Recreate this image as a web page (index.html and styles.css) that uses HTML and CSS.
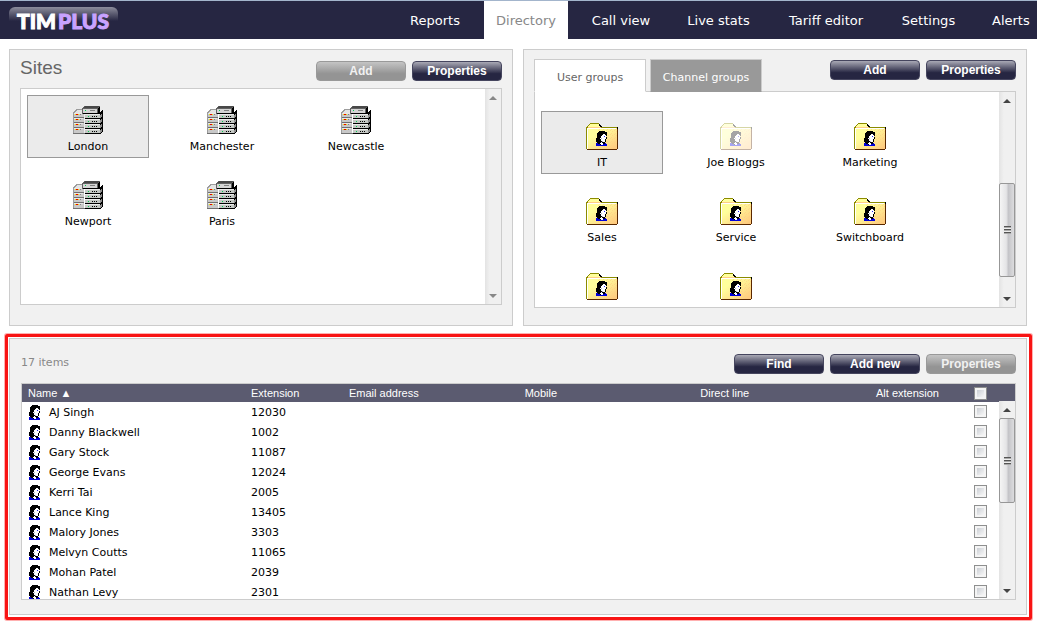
FILE: index.html
```html
<!DOCTYPE html>
<html lang="en">
<head>
<meta charset="utf-8">
<title>TIMPLUS - Directory</title>
<link rel="stylesheet" href="styles.css">
</head>
<body>
<svg class="sprites" width="0" height="0" aria-hidden="true">
  <symbol id="person" viewBox="0 0 11 15">
    <path fill="#0000d8" d="M0 12h10v1h1v2h-11z"/>
    <path fill="#000" d="M3 0h6v1h2v4h-1v1h1v2h-1v3h-1v2h-2v1h-3v-1h-2v-1h-1v-1h-1v-4h1v-5h1v-1h1z"/>
    <path fill="#fff" d="M7 3h2v1h1v4h-1v3h-3v-1h-1v-2h-1v-1h1v-2h1v-1h1zM5 11h1v1h1v2h-2v-1h-1v-1h1z"/>
    <path fill="#b8b8cc" d="M5 7h1v1h-1zM6 10h1v1h-1z"/>
    <path fill="#2020f0" d="M8 5h1v1h-1z"/>
  </symbol>
  <symbol id="folder" viewBox="0 0 32 28">
    <path fill="#8c8c00" d="M4 1h9v1h1v1h1v1h1v1h15v1h1v21h-1v1h-30v-1h-1v-22h1v-1h1v-1h1v-1h1z"/>
    <path fill="#ffff9c" d="M4 2h9v1h1v1h1v1h-13v-1h1v-1h1z"/>
    <path fill="#ffce84" d="M2 5h13v1h-13z"/>
    <path fill="url(#folderFace)" d="M1 6h30v21h-30z"/>
    <path fill="url(#folderGrain)" d="M12 7h19v20h-19z"/>
    <path fill="#fff" d="M1 6h29v1h-28v20h-1z"/>
    <path fill="#5a2800" d="M31 6h1v21h-1v1h-30v-1h30z"/>
    <path fill="#000" d="M13 2h1v1h1v1h1v1h-2v-1h-1zM31 5h1v2h-1z"/>
    <use href="#person" x="10" y="9" width="11" height="15"/>
  </symbol>
  <symbol id="server" viewBox="0 0 30 28">
    <path fill="#9c9c9c" d="M0 6l4 -3h7v3h-1v22h-10z"/>
    <path fill="#e4e4e4" d="M2 6l3 -2h4v3h-7z"/>
    <path fill="#c8c8c8" d="M1 7h10v20h-10z"/>
    <path fill="#e8e8e8" d="M1 7h9v1h-9zM1 12h9v1h-9zM1 17h9v1h-9zM1 22h9v1h-9z"/>
    <path fill="#707070" d="M1 11h10v1h-10zM1 16h10v1h-10zM1 21h10v1h-10zM0 27h12v1h-12z"/>
    <path fill="#f0e000" d="M2 8h1v1h-1zM5 8h1v1h-1zM2 13h1v1h-1zM5 13h1v1h-1zM2 18h1v1h-1zM5 18h1v1h-1zM2 23h1v1h-1zM5 23h1v1h-1z"/>
    <path fill="#e00000" d="M3 8h2v1h-2zM3 13h2v1h-2zM3 18h2v1h-2zM3 23h2v1h-2z"/>
    <path fill="#808080" d="M7 8h1v1h-1zM7 13h1v1h-1zM7 18h1v1h-1zM7 23h1v1h-1z"/>
    <path fill="#000" d="M12 7h15l2 -3h1v21l-3 3h-15z"/>
    <path fill="#8c8c8c" d="M27 9l2 -2v3l-2 2zM27 14l2 -2v3l-2 2zM27 19l2 -2v3l-2 2zM27 24l2 -2v3l-2 2z"/>
    <path fill="#c4c8c4" d="M12 8h15v4h-15zM12 13h15v4h-15zM12 18h15v4h-15zM12 23h15v4h-15z"/>
    <path fill="#ececec" d="M12 8h15v1h-15zM12 13h15v1h-15zM12 18h15v1h-15zM12 23h15v1h-15z"/>
    <path fill="#00d050" d="M15 10h1v1h-1zM15 15h1v1h-1zM15 20h1v1h-1zM15 25h1v1h-1z"/>
    <path fill="#000" d="M19 10h1v1h-1zM21 10h1v1h-1zM23 10h1v1h-1zM19 15h1v1h-1zM21 15h1v1h-1zM23 15h1v1h-1zM19 20h1v1h-1zM21 20h1v1h-1zM23 20h1v1h-1zM19 25h1v1h-1zM21 25h1v1h-1zM23 25h1v1h-1z"/>
    <path fill="#606060" d="M9 3l2 -3h15l1 1v5l-2 2h-16z"/>
    <path fill="#484848" d="M12 0h14l-2 2h-14z"/>
    <path fill="#d4d4d4" d="M10 3h14v4h-14z"/>
    <path fill="#000" d="M25 2l2 -2v6l-2 2zM10 7h15v1h-15z"/>
    <path fill="#00d050" d="M12 4h1v1h-1z"/>
    <path fill="#808080" d="M17 4h5v1h-5z"/>
  </symbol>
  <defs>
    <linearGradient id="folderFace" x1="0" y1="0" x2="1" y2="1">
      <stop offset="0.300" stop-color="#ffff9c"/><stop offset="1" stop-color="#ffc67c"/>
    </linearGradient>
    <pattern id="folderGrain" width="4" height="4" patternUnits="userSpaceOnUse">
      <path fill="#ffce84" opacity=".6" d="M0 0h1v1h-1zM2 1h1v1h-1zM1 3h1v1h-1z"/>
    </pattern>
  </defs>
</svg>

<header class="topbar">
  <a class="logo" href="#">TIM<span class="logo-plus">PLUS</span></a>
  <nav class="nav">
    <a href="#">Reports</a>
    <a href="#" class="current" aria-current="page">Directory</a>
    <a href="#">Call view</a>
    <a href="#">Live stats</a>
    <a href="#">Tariff editor</a>
    <a href="#">Settings</a>
    <a href="#">Alerts</a>
  </nav>
</header>

<main class="content">
  <div class="upper">
    <section class="panel sites">
      <div class="bar">
        <h1 class="title">Sites</h1>
        <div class="actions">
          <button class="btn" disabled>Add</button>
          <button class="btn">Properties</button>
        </div>
      </div>
      <div class="list">
        <div class="tiles">
          <button class="tile selected"><svg class="server"><use href="#server"/></svg>London</button>
          <button class="tile"><svg class="server"><use href="#server"/></svg>Manchester</button>
          <button class="tile"><svg class="server"><use href="#server"/></svg>Newcastle</button>
          <button class="tile"><svg class="server"><use href="#server"/></svg>Newport</button>
          <button class="tile"><svg class="server"><use href="#server"/></svg>Paris</button>
        </div>
        <div class="scrollbar off" aria-hidden="true"><i class="arrow up"></i><i class="space"></i><i class="arrow down"></i></div>
      </div>
    </section>

    <section class="panel groups">
      <div class="bar">
        <div class="tabs" role="tablist">
          <button class="tab active" role="tab" aria-selected="true">User groups</button>
          <button class="tab" role="tab" aria-selected="false">Channel groups</button>
        </div>
        <div class="actions">
          <button class="btn">Add</button>
          <button class="btn">Properties</button>
        </div>
      </div>
      <div class="list">
        <div class="tiles">
          <button class="tile selected"><svg class="folder"><use href="#folder"/></svg>IT</button>
          <button class="tile"><svg class="folder faded"><use href="#folder"/></svg>Joe Bloggs</button>
          <button class="tile"><svg class="folder"><use href="#folder"/></svg>Marketing</button>
          <button class="tile"><svg class="folder"><use href="#folder"/></svg>Sales</button>
          <button class="tile"><svg class="folder"><use href="#folder"/></svg>Service</button>
          <button class="tile"><svg class="folder"><use href="#folder"/></svg>Switchboard</button>
          <button class="tile" aria-label="User group"><svg class="folder"><use href="#folder"/></svg></button>
          <button class="tile" aria-label="User group"><svg class="folder"><use href="#folder"/></svg></button>
        </div>
        <div class="scrollbar" aria-hidden="true"><i class="arrow up"></i><i class="space before"></i><i class="thumb"></i><i class="space after"></i><i class="arrow down"></i></div>
      </div>
    </section>
  </div>

  <div class="highlight">
    <section class="panel users">
      <div class="bar">
        <span class="count">17 items</span>
        <div class="actions">
          <button class="btn">Find</button>
          <button class="btn">Add new</button>
          <button class="btn" disabled>Properties</button>
        </div>
      </div>
      <div class="list">
        <table class="grid">
          <colgroup><col class="c-name"><col class="c-ext"><col><col><col><col class="c-ext"><col class="c-check"></colgroup>
          <thead>
            <tr><th><button class="sort">Name ▲</button></th><th>Extension</th><th>Email address</th><th>Mobile</th><th>Direct line</th><th>Alt extension</th><th><input type="checkbox" aria-label="Select all"></th></tr>
          </thead>
          <tbody>
            <tr><td><span class="who"><svg class="person"><use href="#person"/></svg>AJ Singh</span></td><td>12030</td><td></td><td></td><td></td><td></td><td><input type="checkbox" aria-label="Select AJ Singh"></td></tr>
            <tr><td><span class="who"><svg class="person"><use href="#person"/></svg>Danny Blackwell</span></td><td>1002</td><td></td><td></td><td></td><td></td><td><input type="checkbox" aria-label="Select Danny Blackwell"></td></tr>
            <tr><td><span class="who"><svg class="person"><use href="#person"/></svg>Gary Stock</span></td><td>11087</td><td></td><td></td><td></td><td></td><td><input type="checkbox" aria-label="Select Gary Stock"></td></tr>
            <tr><td><span class="who"><svg class="person"><use href="#person"/></svg>George Evans</span></td><td>12024</td><td></td><td></td><td></td><td></td><td><input type="checkbox" aria-label="Select George Evans"></td></tr>
            <tr><td><span class="who"><svg class="person"><use href="#person"/></svg>Kerri Tai</span></td><td>2005</td><td></td><td></td><td></td><td></td><td><input type="checkbox" aria-label="Select Kerri Tai"></td></tr>
            <tr><td><span class="who"><svg class="person"><use href="#person"/></svg>Lance King</span></td><td>13405</td><td></td><td></td><td></td><td></td><td><input type="checkbox" aria-label="Select Lance King"></td></tr>
            <tr><td><span class="who"><svg class="person"><use href="#person"/></svg>Malory Jones</span></td><td>3303</td><td></td><td></td><td></td><td></td><td><input type="checkbox" aria-label="Select Malory Jones"></td></tr>
            <tr><td><span class="who"><svg class="person"><use href="#person"/></svg>Melvyn Coutts</span></td><td>11065</td><td></td><td></td><td></td><td></td><td><input type="checkbox" aria-label="Select Melvyn Coutts"></td></tr>
            <tr><td><span class="who"><svg class="person"><use href="#person"/></svg>Mohan Patel</span></td><td>2039</td><td></td><td></td><td></td><td></td><td><input type="checkbox" aria-label="Select Mohan Patel"></td></tr>
            <tr><td><span class="who"><svg class="person"><use href="#person"/></svg>Nathan Levy</span></td><td>2301</td><td></td><td></td><td></td><td></td><td><input type="checkbox" aria-label="Select Nathan Levy"></td></tr>
          </tbody>
        </table>
        <div class="scrollbar" aria-hidden="true"><i class="arrow up"></i><i class="thumb"></i><i class="space after"></i><i class="arrow down"></i></div>
      </div>
    </section>
  </div>
</main>
</body>
</html>
```

FILE: styles.css
```css
* { box-sizing: border-box; }

body {
  margin: 0;
  height: 100vh;
  display: flex;
  flex-direction: column;
  overflow: hidden;
  background: #fff;
  color: #000;
  font: 11px/14px "DejaVu Sans", Verdana, sans-serif;
}

button { font: inherit; cursor: pointer; }
svg { display: block; shape-rendering: crispEdges; }
.sprites { position: absolute; }

/* Top bar */
.topbar {
  display: flex;
  justify-content: space-between;
  flex: none;
  height: 39px;
  padding-left: 9px;
  border-top: 1px solid #a3b5cc;
  background: #262642;
}
.logo {
  width: 109px;
  height: 26px;
  margin-top: 6px;
  padding-left: 8px;
  border-radius: 6px 6px 0 0;
  background: linear-gradient(#8d8d9c, #262642 14px);
  color: #fff;
  font: 900 21px/27px Lato, sans-serif;
  -webkit-text-stroke: 1px;
  text-decoration: none;
  white-space: nowrap;
}
.logo-plus { margin-left: 2px; color: #c8a2ff; }
.nav {
  display: grid;
  grid-template-columns: 74px 84px 82px 89px 102px 79px 57px;
  gap: 12px;
  font-size: 13px;
  line-height: 40px;
  text-align: center;
}
.nav a { height: 38px; color: #fff; text-decoration: none; white-space: nowrap; }
.nav a:last-child { padding-left: 12px; text-align: left; }
.nav .current { background: #fff; color: #888; }

/* Panels */
.content {
  flex: 1;
  min-height: 0;
  display: flex;
  flex-direction: column;
  gap: 8px;
  padding: 10px 5px 8px;
}
.upper {
  flex: 1 1 277px;
  min-height: 0;
  display: grid;
  grid-template-columns: 1fr 1fr;
  gap: 10px;
  padding: 0 5px 0 4px;
}
.highlight {
  flex: 1 1 286px;
  min-height: 0;
  display: flex;
  padding: 1px 2px 2px 1px;
  border: 3px solid #f81414;
  border-radius: 2px;
  box-shadow: 0 0 0 1px #ffb0b0;
}
.panel {
  flex: 1;
  min-width: 0;
  min-height: 0;
  display: flex;
  flex-direction: column;
  border: 1px solid #ccc;
  background: #f1f1f1;
}
.sites { padding: 8px 10px 20px; }
.groups { padding: 9px 10px 17px; }
.users { padding: 15px 10px 14px 11px; }

.bar { display: flex; justify-content: space-between; flex: none; }
.sites .bar { height: 30px; }
.groups .bar { height: 32px; }
.users .bar { height: 29px; }
.sites .actions { padding-top: 3px; }
.groups .actions { padding-top: 1px; }
.title { margin: 0; color: #666; font: 19px/20px "Liberation Sans", Arial, sans-serif; }
.count { color: #888; line-height: 17px; }

.actions { display: flex; gap: 6px; }
.btn {
  width: 90px;
  height: 20px;
  padding: 0;
  border: 1px solid #45455e;
  border-radius: 4px;
  background: linear-gradient(#a9a9b5, #262642 65%);
  color: #fff;
  font: bold 12px/16px "Liberation Sans", Arial, sans-serif;
}
.btn:disabled { border-color: #999; background: linear-gradient(#c4c4c4, #949494 65%); color: #f1f1f1; }

.tabs { display: flex; gap: 4px; height: 33px; position: relative; z-index: 1; }
.tab {
  width: 112px;
  padding: 4px 0 0;
  border: 1px solid #ccc;
  border-bottom-color: #999;
  background: #999;
  color: #fff;
}
.tab.active { border-bottom-color: #fff; background: #fff; color: #666; }

/* Scrolling lists */
.list {
  position: relative;
  flex: 1;
  min-height: 0;
  overflow: hidden;
  border: 1px solid #ccc;
  background: #fff;
}
.tiles { display: grid; grid-template-columns: repeat(3, 122px); gap: 12px; padding: 6px; }
.groups .tiles { padding-top: 19px; }
.tile {
  display: flex;
  flex-direction: column;
  align-items: center;
  gap: 6px;
  height: 63px;
  padding: 10px 0 0;
  border: 1px solid transparent;
  background: none;
  color: #000;
}
.tile.selected { border-color: #999; background: #ebebeb; }
.server { width: 30px; height: 28px; }
.folder { width: 32px; height: 28px; }
.faded { opacity: .35; }
.person { width: 11px; height: 15px; }

.scrollbar {
  position: absolute;
  top: 0;
  right: 0;
  bottom: 0;
  display: flex;
  flex-direction: column;
  width: 16px;
  background: linear-gradient(90deg, #e3e3e3, #f0f0f0 30%, #f0f0f0);
}
.users .scrollbar { top: 17px; }
.arrow { flex: none; height: 17px; display: grid; place-items: center; }
.arrow::before { content: ""; border: 4px solid transparent; border-top-width: 0; border-bottom: 4px solid #444; }
.arrow.down::before { border-top: 4px solid #444; border-bottom-width: 0; }
.off .up::before { border-bottom-color: #888; }
.off .down::before { border-top-color: #888; }
.space { flex: 1; }
.thumb {
  display: grid;
  place-items: center;
  flex: 93;
  border: 1px solid #979797;
  border-radius: 2px;
  background: linear-gradient(90deg, #f5f5f5, #e4e4e6 45%, #c4c4c8 60%, #dcdcde);
}
.thumb::before {
  content: "";
  width: 7px;
  height: 8px;
  background: repeating-linear-gradient(#555 0 1px, #aaa 1px 2px, #eee 2px 3px);
}
.groups .before { flex: 75; }
.groups .after { flex: 13; }
.users .thumb { flex: 85; }
.users .after { flex: 80; }

/* User table */
.grid { width: 100%; table-layout: fixed; border-collapse: collapse; }
.c-name { width: 223px; }
.c-ext { width: 98px; }
.c-check { width: 47px; }
.grid th, .grid td { padding: 0 0 0 6px; text-align: left; white-space: nowrap; }
.grid th {
  height: 18px;
  background: #5b5b70;
  color: #fff;
  font: 11px/18px "Liberation Sans", Arial, sans-serif;
}
.grid td { height: 20px; padding-top: 1px; }
.grid td:last-child { padding: 0 0 1px 6px; }
.sort { padding: 0; border: 0; background: none; color: inherit; display: block; }
.who { display: flex; align-items: center; gap: 9px; }
.grid input {
  appearance: none;
  display: block;
  width: 13px;
  height: 13px;
  margin: 0;
  border: 1px solid #8e8f8f;
  background: linear-gradient(135deg, #cbcfd5, #f6f6f6) content-box, #f4f4f4;
  padding: 2px;
}
.who { padding-left: 1px; }
```
